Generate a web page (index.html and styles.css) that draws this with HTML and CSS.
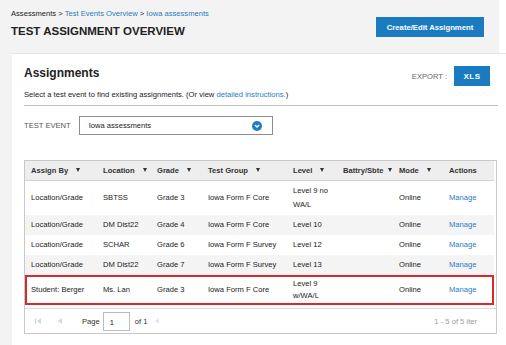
FILE: index.html
```html
<!DOCTYPE html>
<html lang="en">
<head>
    <meta charset="UTF-8">
    <meta name="viewport" content="width=device-width, initial-scale=1.0">
    <title>Test Assignment Overview</title>
    <link rel="stylesheet" href="styles.css">
</head>
<body>
<div class="page">
    <div class="top">
        <div>
            <div class="crumbs">Assessments &gt; <a href="#">Test Events Overview</a> &gt; <a href="#">Iowa assessments</a></div>
            <h1>TEST ASSIGNMENT OVERVIEW</h1>
        </div>
        <button class="btn btn-create">Create/Edit Assignment</button>
    </div>

    <div class="card">
        <div class="card-head">
            <h2>Assignments</h2>
            <div class="export">
                <span class="export-label">EXPORT :</span>
                <button class="btn btn-xls">XLS</button>
            </div>
        </div>
        <p class="hint">Select a test event to find existing assignments. (Or view <a href="#">detailed instructions.</a>)</p>
        <hr class="rule">

        <div class="filter">
            <span class="filter-label">TEST EVENT</span>
            <div class="select">
                <span>Iowa assessments</span>
                <svg class="chev" width="10" height="10" viewBox="0 0 10 10">
                    <circle cx="5" cy="5" r="5" fill="#1f7dc3"/>
                    <path d="M2.9 4.1 L5 6.1 L7.1 4.1" fill="none" stroke="#fff" stroke-width="1.4"/>
                </svg>
            </div>
        </div>

        <div class="grid">
            <table>
                <colgroup>
                    <col style="width:72px">
                    <col style="width:54px">
                    <col style="width:51px">
                    <col style="width:85px">
                    <col style="width:50px">
                    <col style="width:56px">
                    <col style="width:50px">
                    <col style="width:51px">
                </colgroup>
                <thead>
                    <tr>
                        <th>Assign By<i class="sort"></i></th>
                        <th>Location<i class="sort"></i></th>
                        <th>Grade<i class="sort"></i></th>
                        <th>Test Group<i class="sort"></i></th>
                        <th>Level<i class="sort"></i></th>
                        <th>Battry/Sbte<i class="sort sort-tight"></i></th>
                        <th>Mode<i class="sort"></i></th>
                        <th>Actions</th>
                    </tr>
                </thead>
                <tbody>
                    <tr>
                        <td>Location/Grade</td>
                        <td>SBTSS</td>
                        <td>Grade 3</td>
                        <td>Iowa Form F Core</td>
                        <td>Level 9 no WA/L</td>
                        <td></td>
                        <td>Online</td>
                        <td><a href="#">Manage</a></td>
                    </tr>
                    <tr class="alt">
                        <td>Location/Grade</td>
                        <td>DM Dist22</td>
                        <td>Grade 4</td>
                        <td>Iowa Form F Core</td>
                        <td>Level 10</td>
                        <td></td>
                        <td>Online</td>
                        <td><a href="#">Manage</a></td>
                    </tr>
                    <tr>
                        <td>Location/Grade</td>
                        <td>SCHAR</td>
                        <td>Grade 6</td>
                        <td>Iowa Form F Survey</td>
                        <td>Level 12</td>
                        <td></td>
                        <td>Online</td>
                        <td><a href="#">Manage</a></td>
                    </tr>
                    <tr class="alt">
                        <td>Location/Grade</td>
                        <td>DM Dist22</td>
                        <td>Grade 7</td>
                        <td>Iowa Form F Survey</td>
                        <td>Level 13</td>
                        <td></td>
                        <td>Online</td>
                        <td><a href="#">Manage</a></td>
                    </tr>
                    <tr class="picked">
                        <td>Student: Berger</td>
                        <td>Ms. Lan</td>
                        <td>Grade 3</td>
                        <td>Iowa Form F Core</td>
                        <td>Level 9 w/WA/L</td>
                        <td></td>
                        <td>Online</td>
                        <td><a href="#">Manage</a></td>
                    </tr>
                </tbody>
            </table>

            <div class="pager">
                <div class="pager-left">
                    <svg class="pg-first" width="6" height="6" viewBox="0 0 6 6">
                        <rect x="0" y="0" width="1.2" height="6" fill="#cdd9e5"/>
                        <path d="M6 0 L2 3 L6 6 Z" fill="#cdd9e5"/>
                    </svg>
                    <svg class="pg-prev" width="4" height="6" viewBox="0 0 4 6">
                        <path d="M4 0 L0 3 L4 6 Z" fill="#cdd9e5"/>
                    </svg>
                    <span class="pg-text">Page</span>
                    <span class="pg-input">1</span>
                    <span class="pg-text">of 1</span>
                    <svg class="pg-next" width="4" height="6" viewBox="0 0 4 6">
                        <path d="M4 0 L0 3 L4 6 Z" fill="#dfe7ef"/>
                    </svg>
                </div>
                <span class="pg-count">1 - 5 of 5 iter</span>
            </div>
        </div>
    </div>
</div>
</body>
</html>
```

FILE: styles.css
```css
body {
    margin: 0;
    background-color: #fff;
    overflow: hidden;
    font-family: "Liberation Sans", Arial, sans-serif;
    font-size: 7.6px;
    color: #222;
}

a {
    color: #2a7bc3;
    text-decoration: none;
}

.page {
    width: 499px;
    min-height: 345px;
    background-color: #f3f3f3;
}

.top {
    display: flex;
    justify-content: space-between;
    align-items: flex-start;
    height: 53px;
    box-sizing: border-box;
    padding: 8px 15px 0 11px;
}

.crumbs {
    line-height: 11px;
    color: #222;
}

h1 {
    margin: 5px 0 0;
    font-size: 11.5px;
    line-height: 14px;
    color: #222;
}

.btn {
    border: none;
    background-color: #1a7bc0;
    color: #fff;
    font-family: inherit;
    font-weight: bold;
    font-size: 7.7px;
    padding: 0;
    cursor: pointer;
}

.btn-create {
    margin-top: 9px;
    width: 108px;
    height: 20px;
}

.card {
    width: 494px;
    margin-left: 12px;
    box-sizing: border-box;
    padding: 0 8px 12px 12px;
    background-color: #fff;
    border-top: 1px solid #e4e4e4;
}

.card-head {
    display: flex;
    justify-content: space-between;
    align-items: flex-start;
    padding-top: 12px;
}

h2 {
    margin: 0;
    font-size: 12px;
    line-height: 14px;
    color: #222;
}

.export {
    display: flex;
    align-items: center;
    gap: 7px;
    margin-right: 8px;
}

.export-label {
    color: #666;
    margin-top: 1px;
}

.btn-xls {
    width: 36px;
    height: 20px;
    font-size: 8px;
    letter-spacing: 0.4px;
}

.hint {
    margin: 3px 0 0;
    line-height: 11px;
}

.rule {
    margin: 5px 0 0;
    border: none;
    border-top: 1px solid #c2c2c2;
}

.filter {
    display: flex;
    align-items: center;
    gap: 8px;
    margin-top: 10px;
}

.filter-label {
    color: #555;
}

.select {
    display: flex;
    justify-content: space-between;
    align-items: center;
    width: 194px;
    height: 19px;
    box-sizing: border-box;
    padding: 0 10px 0 9px;
    border: 1px solid #8c8c8c;
}

.chev {
    display: block;
}

.grid {
    margin-top: 25px;
    width: 471px;
    border: 1px solid #c8c8c8;
}

table {
    width: 469px;
    table-layout: fixed;
    border-collapse: collapse;
}

th, td {
    padding: 3px 4px 3px 6px;
    line-height: 14px;
    text-align: left;
    vertical-align: middle;
}

th {
    background-color: #eeeeee;
    border-bottom: 1px solid #d2d2d2;
    color: #333;
    white-space: nowrap;
    padding-top: 3px;
    padding-bottom: 2px;
}

td {
    white-space: nowrap;
}

td:nth-child(5) {
    white-space: normal;
}

.sort {
    display: inline-block;
    margin-left: 8px;
    width: 0;
    height: 0;
    border-left: 2.5px solid transparent;
    border-right: 2.5px solid transparent;
    border-top: 4px solid #333;
    vertical-align: 1px;
}

.sort-tight {
    margin-left: 4px;
}

.alt td {
    background-color: #f4f4f4;
}

.picked {
    outline: 2px solid #d9292c;
    outline-offset: -2px;
}

.picked td {
    line-height: 12px;
    padding-top: 3px;
    padding-bottom: 3px;
}

.pager {
    display: flex;
    justify-content: space-between;
    align-items: center;
    margin-top: 3px;
    height: 24px;
    border-top: 1px solid #dcdcdc;
    padding: 0 19px 0 10px;
}

.pager-left {
    display: flex;
    align-items: center;
}

.pg-prev {
    margin-left: 17px;
}

.pg-text {
    color: #333;
}

.pg-text:first-of-type {
    margin-left: 20px;
}

.pg-input {
    display: inline-block;
    width: 27px;
    height: 19px;
    box-sizing: border-box;
    margin: 0 5px 0 3px;
    padding-left: 6px;
    line-height: 19px;
    border: 1px solid #bcbcbc;
}

.pg-next {
    margin-left: 8px;
}

.pg-count {
    color: #9a9a9a;
}
```
